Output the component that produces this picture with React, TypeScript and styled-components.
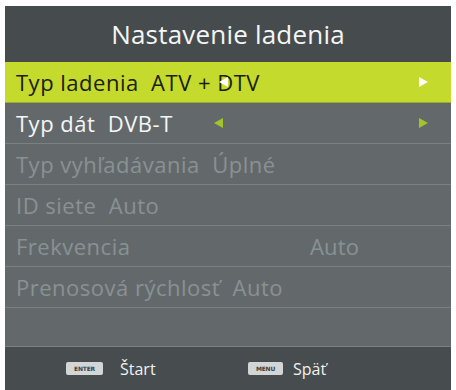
import React from "react";
import styled, { createGlobalStyle } from "styled-components";

const GlobalStyle = createGlobalStyle`
  html, body {
    margin: 0;
    padding: 0;
    background: #ffffff;
  }
  body {
    font-family: "Open Sans", "Noto Sans", sans-serif;
  }
`;

const Screen = styled.div`
  width: 456px;
  height: 390px;
  padding: 6px 5px 0 5px;
  box-sizing: border-box;
  background: #ffffff;
`;

const Panel = styled.div`
  display: flex;
  flex-direction: column;
  height: 384px;
  background: #63696b;
`;

const Header = styled.div`
  display: flex;
  align-items: center;
  justify-content: center;
  height: 56px;
  background: #464c4e;
  color: #f4f5f5;
  font-size: 26px;
  letter-spacing: 0.2px;
`;

const Row = styled.div<{ $active?: boolean; $dim?: boolean }>`
  position: relative;
  display: grid;
  grid-template-columns: 294px 1fr;
  align-items: center;
  height: 40px;
  padding-left: 11px;
  border-bottom: 1px solid ${(p) => (p.$active ? "#9aab2a" : "#7a8183")};
  background: ${(p) => (p.$active ? "#c4da2c" : "#63696b")};
  color: ${(p) => (p.$active ? "#1d2010" : p.$dim ? "#8a9193" : "#f5f6f6")};
  font-size: 22px;
  letter-spacing: 0.5px;
  white-space: pre;
`;

const Value = styled.span`
  letter-spacing: 0.2px;
`;

const Arrow = styled.span<{ $left: number; $dir: "l" | "r"; $color: string }>`
  position: absolute;
  left: ${(p) => p.$left}px;
  top: 50%;
  width: 0;
  height: 0;
  margin-top: -5px;
  border-top: 5.5px solid transparent;
  border-bottom: 5.5px solid transparent;
  ${(p) =>
    p.$dir === "r"
      ? `border-left: 9px solid ${p.$color};`
      : `border-right: 9px solid ${p.$color};`}
`;

const Spacer = styled.div`
  flex: 1;
  border-bottom: 1px solid #7a8183;
  background: #63696b;
`;

const Footer = styled.div`
  display: flex;
  align-items: center;
  height: 43px;
  padding-left: 61px;
  background: #474d4f;
  color: #f0f1f1;
  font-size: 16px;
`;

const Hint = styled.div<{ $width: number; $gap: number }>`
  display: flex;
  align-items: center;
  gap: ${(p) => p.$gap}px;
  width: ${(p) => p.$width}px;
`;

const Key = styled.span<{ $w: number }>`
  display: inline-flex;
  align-items: center;
  justify-content: center;
  width: ${(p) => p.$w}px;
  height: 13px;
  border-radius: 2px;
  background: #d3d6d6;
  color: #3a3f40;
  font-family: "DejaVu Sans", sans-serif;
  font-size: 6px;
  font-weight: bold;
  letter-spacing: -0.2px;
`;

export default function App() {
  return (
    <>
      <GlobalStyle />
      <Screen>
        <Panel>
          <Header>Nastavenie ladenia</Header>
          <Row $active>
            <span>Typ ladenia  ATV + DTV</span>
            <Arrow $left={214} $dir="l" $color="#ffffff" />
            <Arrow $left={414} $dir="r" $color="#ffffff" />
          </Row>
          <Row>
            <span>Typ dát  DVB-T</span>
            <Arrow $left={209} $dir="l" $color="#a3c32a" />
            <Arrow $left={414} $dir="r" $color="#a3c32a" />
          </Row>
          <Row $dim>
            <span>Typ vyhľadávania  Úplné</span>
          </Row>
          <Row $dim>
            <span>ID siete  Auto</span>
          </Row>
          <Row $dim>
            <span>Frekvencia</span>
            <Value>Auto</Value>
          </Row>
          <Row $dim>
            <span>Prenosová rýchlosť  Auto</span>
          </Row>
          <Spacer />
          <Footer>
            <Hint $width={182} $gap={17}>
              <Key $w={37}>ENTER</Key>
              <span>Štart</span>
            </Hint>
            <Hint $width={120} $gap={10}>
              <Key $w={35}>MENU</Key>
              <span>Späť</span>
            </Hint>
          </Footer>
        </Panel>
      </Screen>
    </>
  );
}
